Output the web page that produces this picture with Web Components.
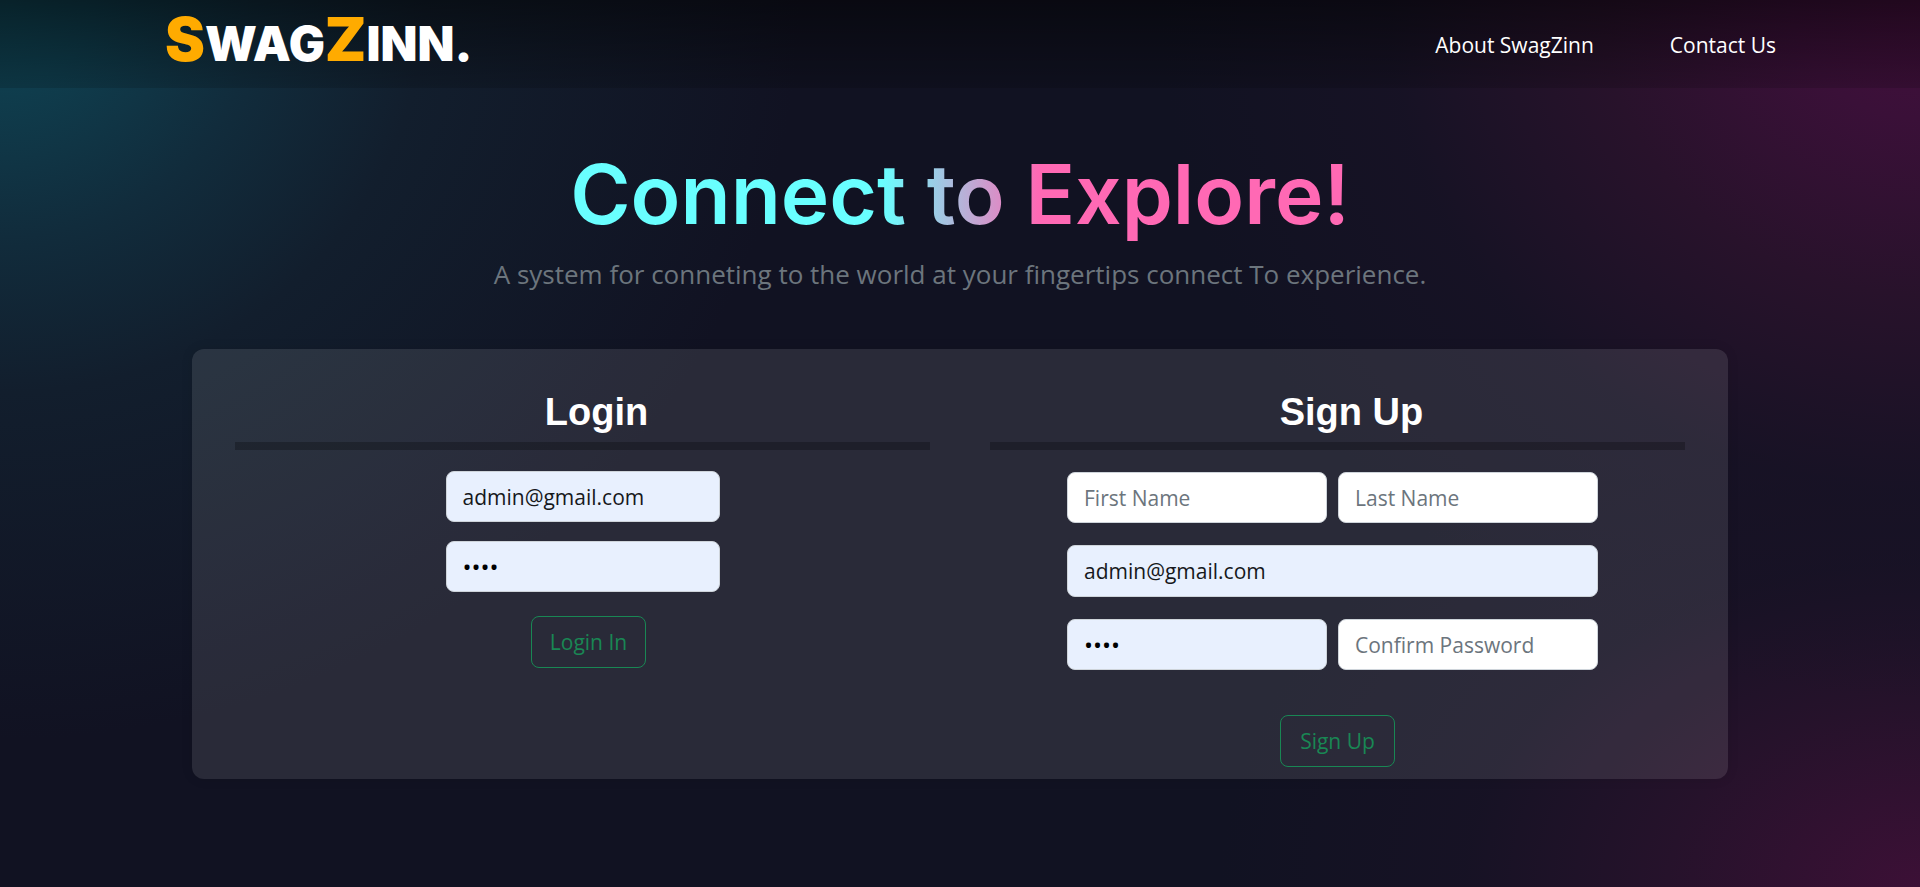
<!DOCTYPE html>
<html lang="en">
<head>
<meta charset="utf-8">
<meta name="viewport" content="width=device-width, initial-scale=1">
<title>SwagZinn</title>
<style>
body {
  margin: 0;
  font-family: "Open Sans", "Noto Sans", sans-serif;
  color: #fff;
  background: #111222;
}
</style>
</head>
<body>
<swag-page>
  <swag-nav slot="nav">
    <nav-link href="#about">About SwagZinn</nav-link>
    <nav-link href="#contact">Contact Us</nav-link>
  </swag-nav>
  <swag-hero>
    Connect to Explore!
    <span slot="lead">A system for conneting to the world at your fingertips connect To experience.</span>
  </swag-hero>
  <auth-card>
    <auth-panel heading="Login"><login-form></login-form></auth-panel>
    <auth-panel heading="Sign Up"><signup-form></signup-form></auth-panel>
  </auth-card>
</swag-page>
<script>
const define = (name, html, setup) => customElements.define(name, class extends HTMLElement {
  constructor() {
    super();
    const t = document.createElement('template');
    t.innerHTML = html;
    this.attachShadow({ mode: 'open' }).append(t.content.cloneNode(true));
  }
  connectedCallback() { if (setup) setup(this, this.shadowRoot); }
});

define('swag-page', `
<style>
:host {
  display: flex; flex-direction: column; min-height: 100vh;
  background:
    radial-gradient(ellipse 800px 740px at 0 0, #0f4454 0%, #0f3d4d 12%, #112c3c 32%, #121e2d 53%, rgba(17,18,34,0) 100%),
    radial-gradient(ellipse 760px 700px at 100% 0, #430f3c 0%, #3a1038 17%, #28122b 42%, rgba(26,18,38,.6) 70%, rgba(17,18,34,0) 100%),
    radial-gradient(ellipse 700px 500px at 100% 100%, #3c1036 0%, #26122b 36%, rgba(26,18,38,.6) 65%, rgba(17,18,34,0) 100%),
    #111222;
}
main { display: flex; flex-direction: column; align-items: center; }
</style>
<slot name="nav"></slot><main><slot></slot></main>`);

define('swag-nav', `
<style>
:host { display: block; background: linear-gradient(rgba(0,0,0,.5), rgba(0,0,0,.14)); }
header { display: flex; align-items: center; justify-content: space-between; height: 88px; padding: 0 144px 0 165px; }
a { font: 900 48px/1 Inter, sans-serif; color: #fff; text-decoration: none; padding-bottom: 10px; }
b { font-size: 60px; font-weight: 900; color: #ffab00; }
nav { display: flex; gap: 76px; padding-top: 2px; }
</style>
<header><a href="#home"><b>S</b>WAG<b>Z</b>INN.</a><nav><slot></slot></nav></header>`);

define('nav-link', `
<style>
:host { display: block; }
a { font-size: 21px; line-height: 32px; font-weight: 500; color: #fff; text-decoration: none; }
</style>
<a><slot></slot></a>`, (el, root) => { root.querySelector('a').href = el.getAttribute('href'); });

define('swag-hero', `
<style>
:host { display: block; text-align: center; padding-top: 58px; }
h1 {
  width: max-content; margin: 0 auto; font: 600 82px/98px Inter, sans-serif;
  background: linear-gradient(90deg, #69ffff 40%, #ff69b4 60%);
  -webkit-background-clip: text; background-clip: text; color: transparent;
}
p { margin: 10px 0 0; font-size: 26px; line-height: 40px; color: #6c757d; }
</style>
<h1><slot></slot></h1><p><slot name="lead"></slot></p>`);

define('auth-card', `
<style>
:host {
  display: grid; grid-template-columns: 1fr 1fr; gap: 60px; box-sizing: border-box;
  width: 80%; margin-top: 55px; padding: 39px 43px 12px; border-radius: 12px;
  background: rgba(255,255,255,.1); box-shadow: 0 0 12px rgba(0,0,0,.1);
}
</style><slot></slot>`);

define('auth-panel', `
<style>
:host { display: block; }
h2 { margin: 0; padding: 0 0 6px 28px; text-align: center; font: 700 38px/48px "Liberation Sans", Arial, sans-serif; }
hr { height: 8px; margin: 0; border: 0; background: rgba(0,0,0,.25); }
</style><h2></h2><hr><slot></slot>`, (el, root) => { root.querySelector('h2').textContent = el.getAttribute('heading'); });

const controls = `
input, button { box-sizing: border-box; font: 21px/32px "Open Sans", "Noto Sans", sans-serif; border-radius: 8px; }
input { height: 51px; width: 100%; min-width: 0; padding: 8px 16px; border: 1px solid #ced4da; background: #fff; color: #16181b; }
input::placeholder { color: #6c757d; opacity: 1; }
input.filled { background: #e8f0fe; }
input.filled[type=password] { font-size: 24px; color: #000; }
button { height: 52px; width: 115px; padding: 0; border: 1px solid #198754; background: transparent; color: #198754; }
`;

define('login-form', `
<style>${controls}
:host { display: block; }
form { display: flex; flex-direction: column; align-items: center; gap: 19px; padding-top: 21px; }
input { width: 274px; }
button { margin-top: 5px; margin-left: 12px; }
</style>
<form>
  <input class="filled" type="email" aria-label="Email" value="admin@gmail.com">
  <input class="filled" type="password" aria-label="Password" value="1234">
  <button type="button">Login In</button>
</form>`);

define('signup-form', `
<style>${controls}
:host { display: block; }
form { display: grid; grid-template-columns: 1fr 1fr; gap: 22px 11px; width: 531px; margin: 0 auto; padding: 22px 10px 0 0; }
.wide { grid-column: 1 / -1; height: 52px; }
button { grid-column: 1 / -1; justify-self: center; margin: 23px 0 0 10px; }
</style>
<form>
  <input type="text" aria-label="First Name" placeholder="First Name">
  <input type="text" aria-label="Last Name" placeholder="Last Name">
  <input class="filled wide" type="email" aria-label="Email" value="admin@gmail.com">
  <input class="filled" type="password" aria-label="Password" value="1234">
  <input type="password" aria-label="Confirm Password" placeholder="Confirm Password">
  <button type="button">Sign Up</button>
</form>`);
</script>
</body>
</html>
